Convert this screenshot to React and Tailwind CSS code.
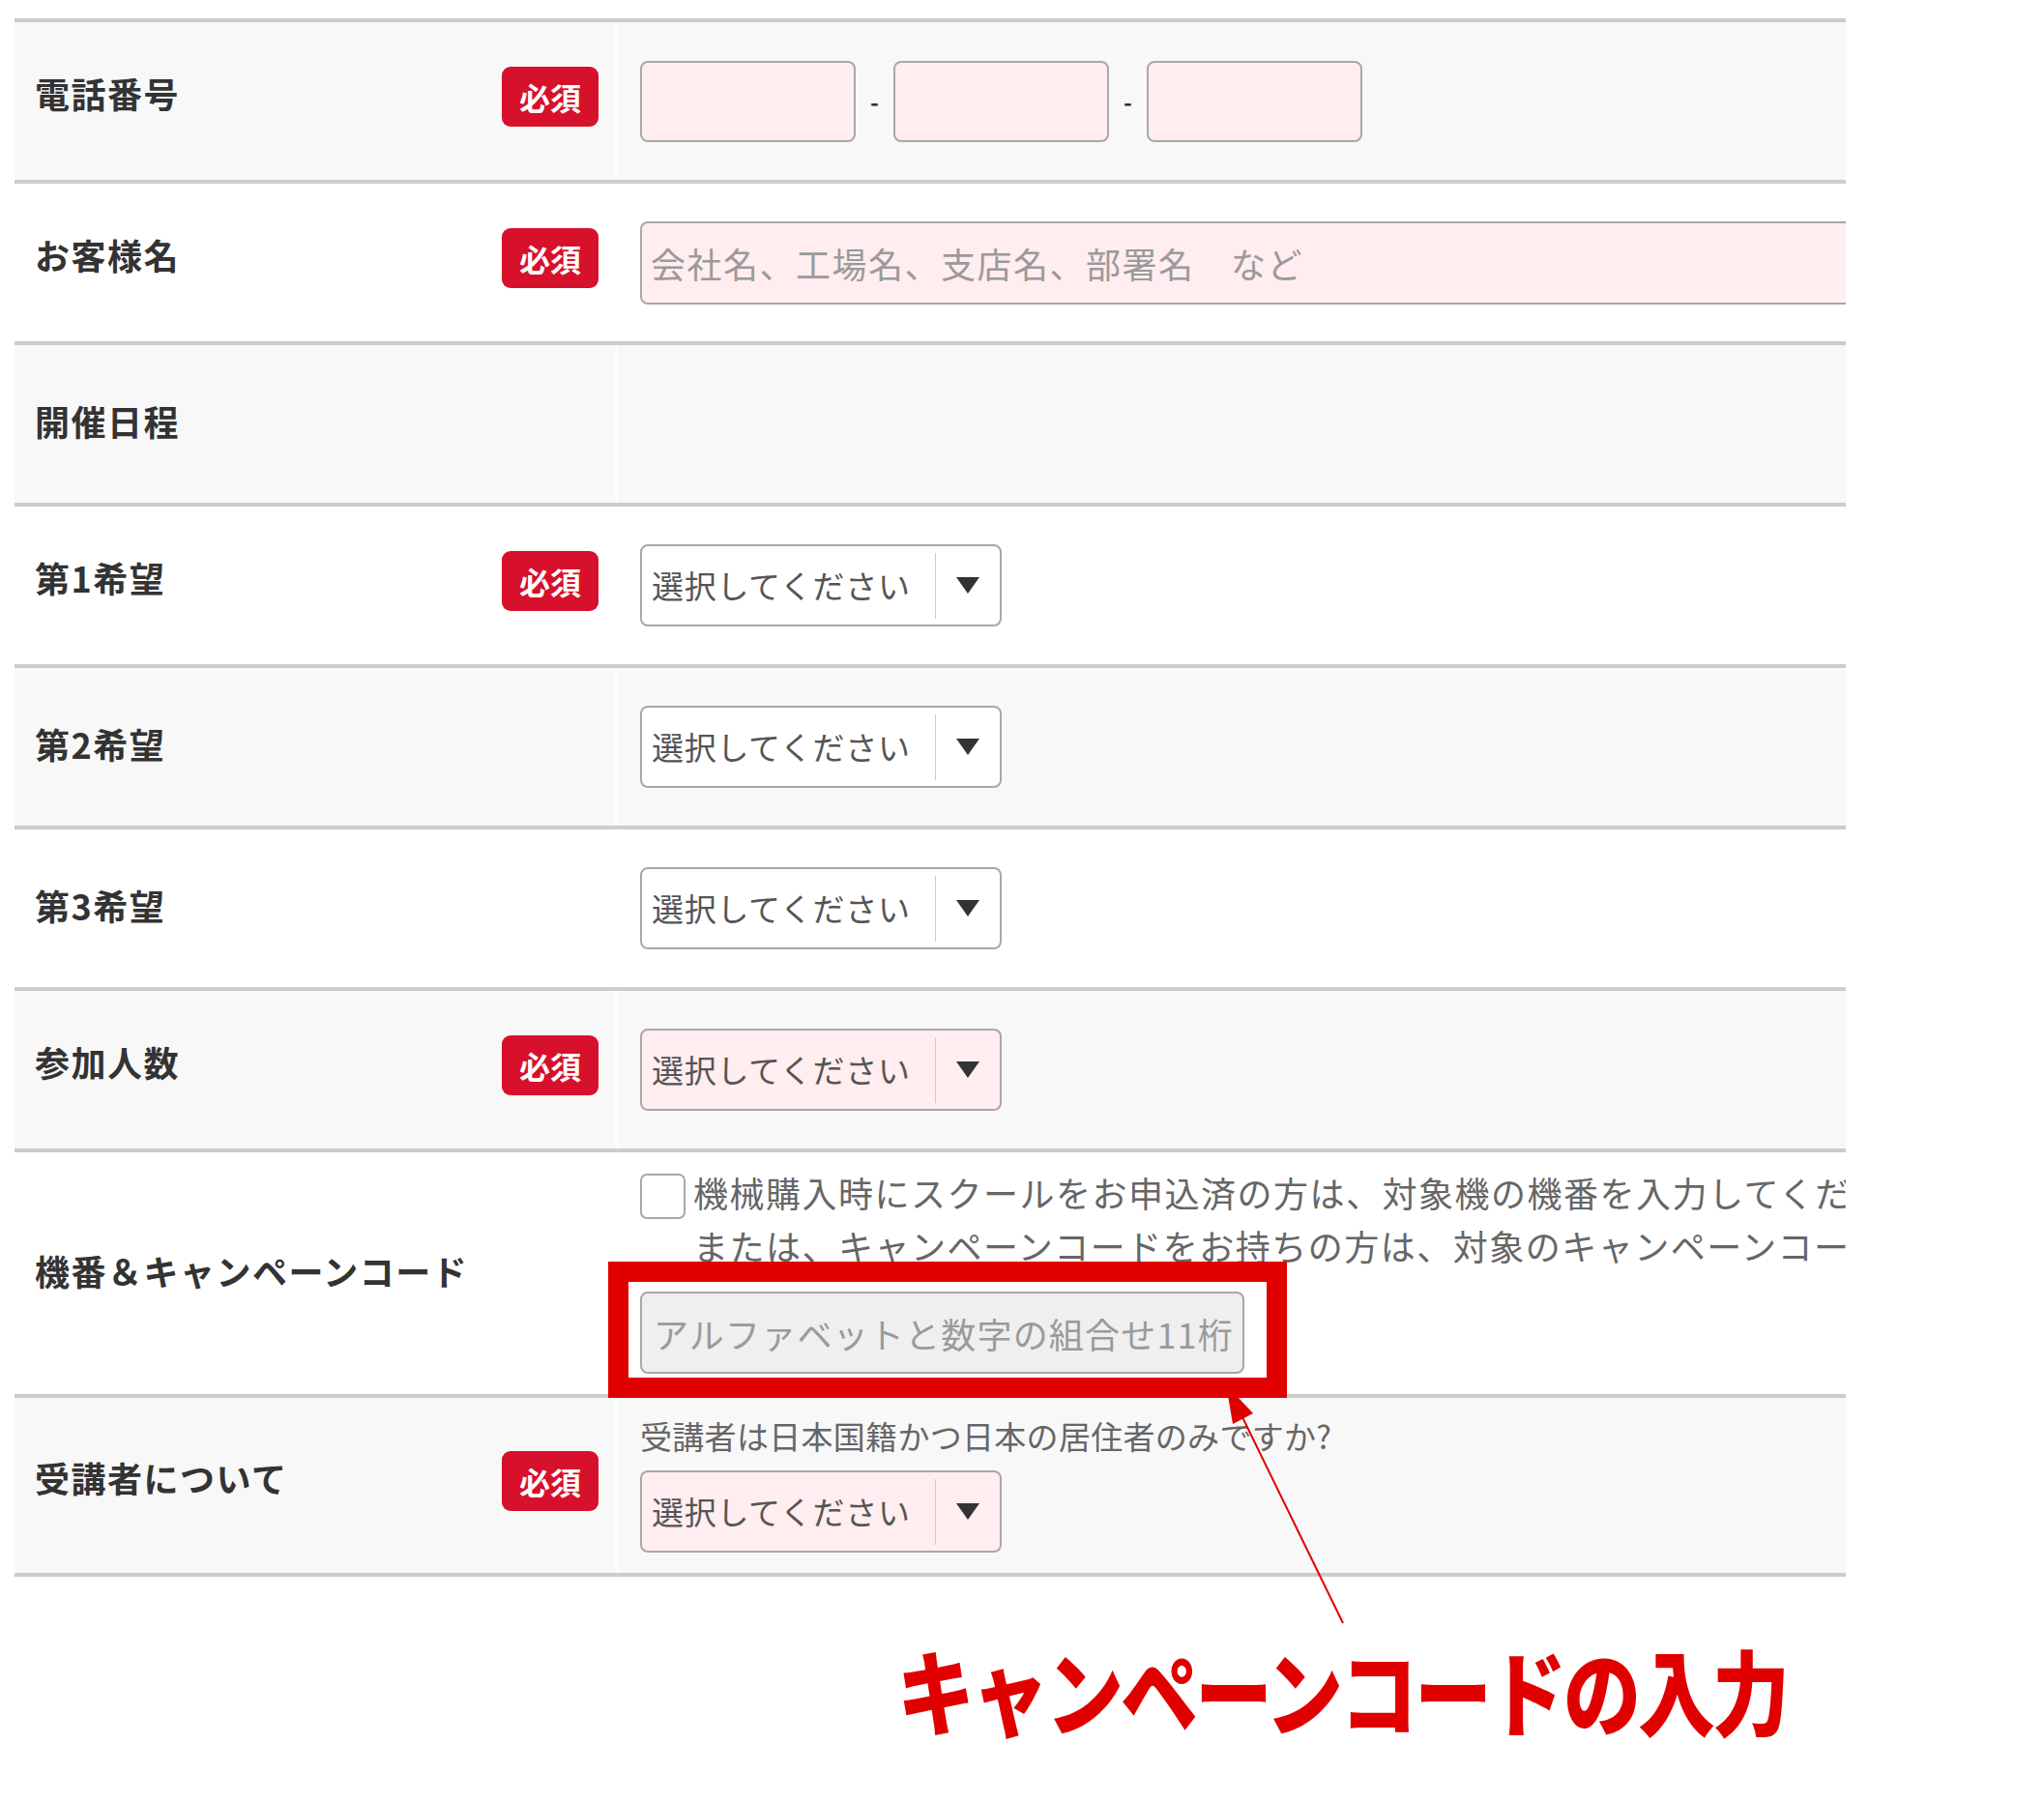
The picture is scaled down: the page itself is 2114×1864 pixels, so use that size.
import React from 'react';

const Badge = () => (
    <span className="w-[100px] h-[62px] rounded-[9px] bg-[#d7102b] text-white text-[32px] font-bold leading-none flex items-center justify-center">
        必須
    </span>
);

const Arrow = () => (
    <svg width="24" height="17" viewBox="0 0 24 17">
        <polygon points="0,0 24,0 12,17" fill="#333333" />
    </svg>
);

const Select = ({ pink }) => (
    <div className={`w-[374px] h-[85px] shrink-0 rounded-[8px] border-2 border-[#a8a8a8] flex items-center ${pink ? 'bg-[#ffedef]' : 'bg-white'}`}>
        <div className="w-[303px] pl-[10px] text-[33px] tracking-[0.7px] text-[#555555] leading-none whitespace-nowrap">選択してください</div>
        <div className="w-px h-[68px] bg-[#cccccc]" />
        <div className="flex-1 flex justify-center">
            <Arrow />
        </div>
    </div>
);

const Row = ({ label, required, gray, className = 'h-[167px] border-t-4', valueClass = 'items-center', children }) => (
    <div className={`flex border-[#cccccc] ${className} ${gray ? 'bg-[#f8f8f8]' : 'bg-white'}`}>
        <div className={`w-[621px] shrink-0 flex items-center justify-between pl-[21px] pr-[17px] ${required ? 'pb-[10px]' : 'pb-[7px]'}`}>
            <span className={`text-[36px] tracking-[1.5px] font-bold text-[#333333] leading-none whitespace-nowrap ${required ? 'mb-[8px]' : ''}`}>{label}</span>
            {required && <Badge />}
        </div>
        <div className={`flex-1 min-w-0 overflow-hidden flex border-l-[3px] border-white/70 pl-[23px] ${valueClass}`}>
            {children}
        </div>
    </div>
);

const phoneInput = "w-[223px] h-[84px] shrink-0 rounded-[8px] border-2 border-[#a8a8a8] bg-[#ffedef]";

export default function App() {
    return (
        <div className="relative w-[2114px] min-h-[1864px] bg-white pt-[19px] pl-[15px] font-['Noto_Sans_CJK_JP','Noto_Sans',sans-serif]">
            <div className="w-[1894px] flex flex-col">
                <Row label="電話番号" required gray>
                    <div className={phoneInput} />
                    <span className="w-[39px] text-center text-[24px] text-[#333333] font-bold">-</span>
                    <div className={phoneInput} />
                    <span className="w-[39px] text-center text-[24px] text-[#333333] font-bold">-</span>
                    <div className={phoneInput} />
                </Row>

                <Row label="お客様名" required>
                    <input
                        readOnly
                        placeholder="会社名、工場名、支店名、部署名　など"
                        className="w-[1400px] h-[86px] shrink-0 rounded-[8px] border-2 border-[#a8a8a8] bg-[#ffedef] pl-[9px] text-[36px] tracking-[1.5px] outline-none placeholder:text-[#9a9a9a]"
                    />
                </Row>

                <Row label="開催日程" gray />

                <Row label="第1希望" required>
                    <Select />
                </Row>

                <Row label="第2希望" gray>
                    <Select />
                </Row>

                <Row label="第3希望">
                    <Select />
                </Row>

                <Row label="参加人数" required gray>
                    <Select pink />
                </Row>

                <Row label="機番＆キャンペーンコード" className="h-[254px] border-t-4" valueClass="flex-col pt-[14px]">
                    <div className="flex items-start">
                        <div className="mt-[8px] w-[47px] h-[47px] shrink-0 rounded-[7px] border-2 border-[#a8a8a8] bg-white" />
                        <div className="ml-[8px] text-[36px] tracking-[1.5px] leading-[55px] text-[#666666] whitespace-nowrap">
                            機械購入時にスクールをお申込済の方は、対象機の機番を入力してください。
                            <br />
                            または、キャンペーンコードをお持ちの方は、対象のキャンペーンコードを入力してください。
                        </div>
                    </div>
                    <input
                        readOnly
                        placeholder="アルファベットと数字の組合せ11桁"
                        className="mt-[20px] w-[625px] h-[85px] shrink-0 rounded-[8px] border-2 border-[#a8a8a8] bg-[#efefef] pl-[12px] text-[36px] tracking-[1.2px] outline-none placeholder:text-[#9a9a9a]"
                    />
                </Row>

                <Row label="受講者について" required gray className="h-[189px] border-y-4" valueClass="flex-col pt-[17px]">
                    <div className="text-[33px] tracking-[0.3px] leading-[44px] text-[#666666] whitespace-nowrap">受講者は日本国籍かつ日本の居住者のみですか?</div>
                    <div className="mt-[14px]">
                        <Select pink />
                    </div>
                </Row>
            </div>

            {/* annotation caption */}
            <div className="mt-[67px] ml-[913px] origin-top-left scale-y-[1.2] text-[80px] font-black leading-none tracking-[-3px] text-[#e00000] whitespace-nowrap">
                キャンペーンコードの入力
            </div>

            {/* annotation arrow */}
            <svg className="absolute left-0 top-0 pointer-events-none" width="2114" height="1864">
                <line x1="1285" y1="1466" x2="1389" y2="1679" stroke="#e00000" strokeWidth="2" />
                <polygon points="1268,1432 1275,1473 1296,1462" fill="#e00000" />
            </svg>

            {/* annotation box */}
            <div className="absolute left-[629px] top-[1305px] w-[702px] h-[141px] border-[21px] border-[#e00000] pointer-events-none" />
        </div>
    );
}
